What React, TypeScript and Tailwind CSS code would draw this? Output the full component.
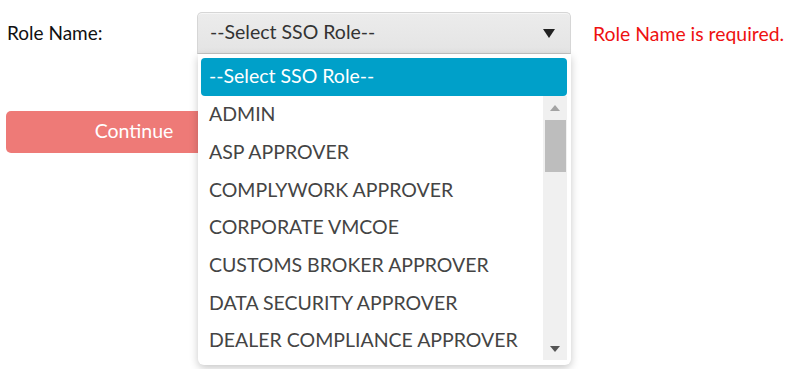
const roles = [
  'ADMIN',
  'ASP APPROVER',
  'COMPLYWORK APPROVER',
  'CORPORATE VMCOE',
  'CUSTOMS BROKER APPROVER',
  'DATA SECURITY APPROVER',
  'DEALER COMPLIANCE APPROVER',
];

function Caret({ up, dark }: { up?: boolean; dark?: boolean }) {
  return (
    <svg width="10" height="6" viewBox="0 0 10 6" className={dark ? 'fill-[#555]' : 'fill-[#a3a3a3]'}>
      {up ? <polygon points="0,6 10,6 5,0" /> : <polygon points="0,0 10,0 5,6" />}
    </svg>
  );
}

export default function App() {
  return (
    <div className="relative h-[369px] w-[791px] overflow-hidden bg-white font-['Lato','Open_Sans',sans-serif]">
      <div className="flex items-start pt-3">
        <label className="w-[197px] pl-[7px] pt-[7px] text-[19px] text-[#111]">Role Name:</label>
        <div className="relative w-[374px]">
          {/* select */}
          <div className="flex h-[42px] items-center justify-between rounded-t-[5px] border border-[#d6d6d6] border-b-[#c4c4c4] bg-gradient-to-b from-[#ececec] to-[#e4e4e4] pl-[12px] pr-[15px] text-[19.5px] text-[#333] shadow-[inset_0_1px_0_#f6f6f6]">
            <span className="-mt-[2px]">--Select SSO Role--</span>
            <svg width="12" height="9" viewBox="0 0 12 9" className="fill-[#222]">
              <polygon points="0,0 12,0 6,9" />
            </svg>
          </div>
          {/* dropdown */}
          <div className="absolute left-[1px] top-[42px] z-10 w-[373px] rounded-b-[6px] bg-white pb-[5px] pl-[3px] pr-[4px] pt-[4px] shadow-[0_3px_8px_rgba(0,0,0,0.22)]">
            <div className="flex h-[38px] items-center rounded-[4px] bg-[#00a0c9] pl-[8px] text-[19.5px] text-white">
              <span className="-mt-[2px]">--Select SSO Role--</span>
            </div>
            <div className="flex">
              <ul className="flex-1">
                {roles.map((r) => (
                  <li key={r} className="flex h-[37.7px] items-center pl-[8px] text-[19.5px] text-[#444]">
                    <span className="-mt-[2px]">{r}</span>
                  </li>
                ))}
              </ul>
              <div className="flex w-[24px] flex-col items-center bg-[#f0f0f0] pt-[9px]">
                <Caret up />
                <div className="mt-[9px] h-[52px] w-[21px] bg-[#bdbdbd]" />
                <div className="mt-auto pb-[8px]">
                  <Caret dark />
                </div>
              </div>
            </div>
          </div>
        </div>
        <span className="ml-[22px] pt-[7px] text-[19.4px] text-[#ee1111]">Role Name is required.</span>
      </div>
      <div className="mt-[57px] pl-[6px]">
        <button className="h-[42px] w-[256px] rounded-[5px] bg-[#ee7a77] pb-[3px] text-[19.5px] text-white">Continue</button>
      </div>
    </div>
  );
}
